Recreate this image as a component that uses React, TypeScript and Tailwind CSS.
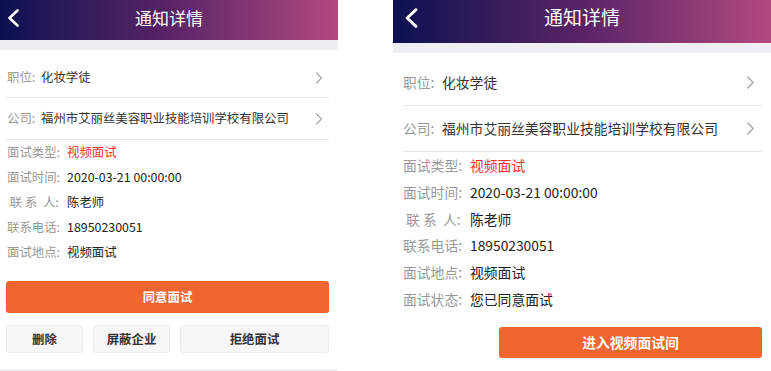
type Size = {
  wrap: string;
  header: string;
  titleRow: string;
  title: string;
  back: string;
  body: string;
  linkRow: string[];
  text: string;
  infoRow: string;
  shortLabel: string;
  label: string;
  chev: string;
};

const SMALL: Size = {
  wrap: 'w-[338px]',
  header: 'h-[40px]',
  titleRow: 'h-[35px]',
  title: 'text-[17px]',
  back: 'left-[7px] w-[12px] h-[18px]',
  body: 'pl-[6px] pr-[9px] pt-[8px]',
  linkRow: ['h-[40px]', 'h-[42px]'],
  text: 'text-[12.4px]',
  infoRow: 'h-[25px] pl-[1px]',
  shortLabel: 'w-[35px] pl-[1px]',
  label: 'w-[60px]',
  chev: 'w-[8px] h-[12px] mr-[6px]',
};

const LARGE: Size = {
  wrap: 'w-[378px]',
  header: 'h-[43px]',
  titleRow: 'h-[35px]',
  title: 'text-[19px]',
  back: 'left-[11px] w-[14px] h-[20px]',
  body: 'pl-[10px] pr-[9px] pt-[7px]',
  linkRow: ['h-[46px]', 'h-[46px]'],
  text: 'text-[13.8px]',
  infoRow: 'h-[26.8px]',
  shortLabel: 'w-[39px]',
  label: 'w-[67px]',
  chev: 'w-[9px] h-[13px] mr-[7px]',
};

const INFO = [
  { label: '面试类型', value: '视频面试', red: true },
  { label: '面试时间', value: '2020-03-21 00:00:00' },
  { label: ' 联 系  人', value: '陈老师' },
  { label: '联系电话', value: '18950230051' },
  { label: '面试地点', value: '视频面试' },
];

function Header({ s }: { s: Size }) {
  return (
    <div className={`${s.header} bg-gradient-to-r from-[#0b1050] via-[#5a2367] to-[#b3497e]`}>
      <div className={`${s.titleRow} relative flex items-center justify-center`}>
        <svg className={`absolute ${s.back}`} viewBox="0 0 12 18" fill="none">
          <path d="M10.5 1.5 L2.5 9 L10.5 16.5" stroke="#fff" strokeWidth="2.6" strokeLinecap="round" strokeLinejoin="round" />
        </svg>
        <span className={`${s.title} text-white`}>通知详情</span>
      </div>
    </div>
  );
}

function LinkRow({ s, h, label, value }: { s: Size; h: string; label: string; value: string }) {
  return (
    <div className={`${h} flex items-center border-b border-[#e6e6e6] ${s.text}`}>
      <span className={`${s.shortLabel} shrink-0 text-[#999]`}>{label}:</span>
      <span className="text-[#333] flex-1 whitespace-nowrap">{value}</span>
      <svg className={s.chev} viewBox="0 0 8 12" fill="none">
        <path d="M1.5 1 L6.5 6 L1.5 11" stroke="#a8a8a8" strokeWidth="1.3" strokeLinecap="round" strokeLinejoin="round" />
      </svg>
    </div>
  );
}

function InfoRows({ s, extra }: { s: Size; extra?: boolean }) {
  const rows = extra ? [...INFO, { label: '面试状态', value: '您已同意面试' }] : INFO;
  return (
    <div className={s.text}>
      {rows.map((r) => (
        <div key={r.label} className={`${s.infoRow} flex items-center`}>
          <span className={`${s.label} shrink-0 text-[#999] whitespace-pre`}>{r.label}:</span>
          <span className={'red' in r && r.red ? 'text-[#f5302e]' : 'text-[#222]'}>{r.value}</span>
        </div>
      ))}
    </div>
  );
}

function LeftScreen() {
  const s = SMALL;
  return (
    <div className={`${s.wrap} h-full flex flex-col bg-white`}>
      <Header s={s} />
      <div className="h-[10px] bg-[#eeeef3]" />
      <div className={s.body}>
        <LinkRow s={s} h={s.linkRow[0]} label="职位" value="化妆学徒" />
        <LinkRow s={s} h={s.linkRow[1]} label="公司" value="福州市艾丽丝美容职业技能培训学校有限公司" />
        <InfoRows s={s} />
        <button className="mt-[16px] w-full h-[32px] rounded-[3px] bg-[#f06530] text-white text-[12.4px] font-bold">
          同意面试
        </button>
        <div className="mt-[12px] flex gap-[10px] text-[12.4px] font-bold text-[#333]">
          <button className="w-[77px] h-[28px] rounded-[3px] bg-[#f7f7f7] border border-[#ececec]">删除</button>
          <button className="w-[77px] h-[28px] rounded-[3px] bg-[#f7f7f7] border border-[#ececec]">屏蔽企业</button>
          <button className="flex-1 h-[28px] rounded-[3px] bg-[#f7f7f7] border border-[#ececec]">拒绝面试</button>
        </div>
      </div>
      <div className="mt-[16px] flex-1 bg-[#eeeef3]" />
    </div>
  );
}

function RightScreen() {
  const s = LARGE;
  return (
    <div className={`${s.wrap} h-full bg-white`}>
      <Header s={s} />
      <div className="h-[10px] bg-[#eeeef3]" />
      <div className={s.body}>
        <LinkRow s={s} h={s.linkRow[0]} label="职位" value="化妆学徒" />
        <LinkRow s={s} h={s.linkRow[1]} label="公司" value="福州市艾丽丝美容职业技能培训学校有限公司" />
        <InfoRows s={s} extra />
        <div className="mt-[14px] flex justify-end">
          <button className="w-[263px] h-[31px] rounded-[3px] bg-[#f06530] text-white text-[13.8px] font-bold">
            进入视频面试间
          </button>
        </div>
      </div>
    </div>
  );
}

export default function App() {
  return (
    <div className="w-[771px] h-[371px] overflow-hidden flex gap-[55px] bg-white font-['Noto_Sans_CJK_SC','Noto_Sans',sans-serif]">
      <LeftScreen />
      <RightScreen />
    </div>
  );
}
